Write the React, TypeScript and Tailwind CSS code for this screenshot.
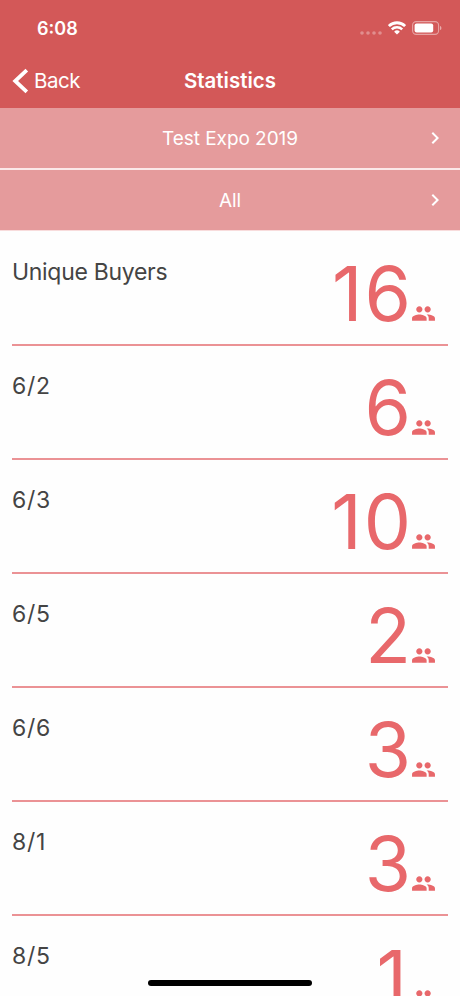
import React from 'react';
import { MdChevronRight, MdPeople } from 'react-icons/md';

const filters = ['Test Expo 2019', 'All'];

const stats = [
  { label: 'Unique Buyers', value: 16 },
  { label: '6/2', value: 6 },
  { label: '6/3', value: 10 },
  { label: '6/5', value: 2 },
  { label: '6/6', value: 3 },
  { label: '8/1', value: 3 },
  { label: '8/5', value: 1 },
];

const StatusBar: React.FC = () => (
  <div className="flex h-[54px] items-center justify-between pl-[37px] pr-[18px] pt-[2px]">
    <span className="pt-px text-[18px] font-semibold leading-6">6:08</span>
    <div className="flex items-center">
      <svg className="mt-[9px] mr-[6px]" width="22" height="4" viewBox="0 0 22 4" fill="#fff" opacity="0.32">
        <circle cx="2" cy="2" r="1.8" />
        <circle cx="8" cy="2" r="1.8" />
        <circle cx="14" cy="2" r="1.8" />
        <circle cx="20" cy="2" r="1.8" />
      </svg>
      <svg className="mr-[6px]" width="18" height="14" viewBox="0 0 18 14" fill="none">
        <path d="M.9 5.1a11.5 11.5 0 0 1 16.2 0" stroke="#fff" strokeWidth="2.8" />
        <path d="M3.8 8.3a7.4 7.4 0 0 1 10.4 0" stroke="#fff" strokeWidth="2.5" />
        <path d="M9 13.6 6.1 10.8a4.1 4.1 0 0 1 5.8 0z" fill="#fff" />
      </svg>
      <svg width="30" height="14" viewBox="0 0 30 14" fill="none">
        <rect x="0.6" y="0.6" width="26" height="12.8" rx="3.6" stroke="#fff" strokeOpacity="0.45" strokeWidth="1.1" />
        <rect x="2.6" y="2.4" width="18.6" height="9.2" rx="2" fill="#fff" />
        <path d="M28 4.9c1.9.6 1.9 3.6 0 4.2z" fill="#fff" fillOpacity="0.5" />
      </svg>
    </div>
  </div>
);

const NavBar: React.FC = () => (
  <div className="grid h-[54px] grid-cols-3 items-center">
    <div className="flex items-center pl-3">
      <svg width="17" height="26" viewBox="0 0 17 26" fill="none">
        <path d="M14.8 2.2 3.2 13l11.6 10.8" stroke="#fff" strokeWidth="3.8" />
      </svg>
      <span className="ml-[5px] text-[20.5px] leading-6 tracking-[-0.5px]">Back</span>
    </div>
    <h1 className="text-center text-[20.5px] font-semibold leading-6">Statistics</h1>
  </div>
);

const App: React.FC = () => {
  return (
    <div className="relative h-[996px] w-[460px] overflow-hidden bg-[#fefefe] font-['Inter',sans-serif]">
      <header className="bg-[#d35858] text-white">
        <StatusBar />
        <NavBar />
      </header>

      {/* Filters */}
      <div className="flex flex-col gap-[2px] border-b border-[#f8dcdc] bg-[#fbe9e9]">
        {filters.map((filter) => (
          <div key={filter} className="grid h-[60px] grid-cols-[1fr_auto_1fr] items-center bg-[#e59b9c] pr-[13px] text-white">
            <span className="col-start-2 pt-px pl-[13px] text-[19px] leading-6 tracking-[-0.05px]">{filter}</span>
            <MdChevronRight className="h-6 w-6 justify-self-end" />
          </div>
        ))}
      </div>

      {/* Stats */}
      <div className="px-3 pt-px">
        {stats.map((stat) => (
          <div key={stat.label} className="flex h-[114px] justify-between border-b-2 border-[#eb9295] pt-[25px]">
            <span
              className={`text-[23px] leading-[30px] text-[#444] ${
                stat.label.includes('/') ? 'tracking-[0.7px]' : 'tracking-[-0.3px]'
              }`}
            >
              {stat.label}
            </span>
            <div className="flex h-[75px] items-end pr-[12px] text-[#e8686b]">
              <span
                className={`mb-px text-[75px] leading-[75px] tracking-[2px] ${
                  stat.value === 1 ? 'pr-[4px]' : ''
                }`}
              >
                {stat.value}
              </span>
              <MdPeople className="mb-[6px] ml-[-2px] h-[25px] w-[25px]" />
            </div>
          </div>
        ))}
      </div>

      {/* Home indicator */}
      <div className="absolute bottom-[10px] left-[148px] h-[6px] w-[164px] rounded-full bg-black"></div>
    </div>
  );
};

export default App;
